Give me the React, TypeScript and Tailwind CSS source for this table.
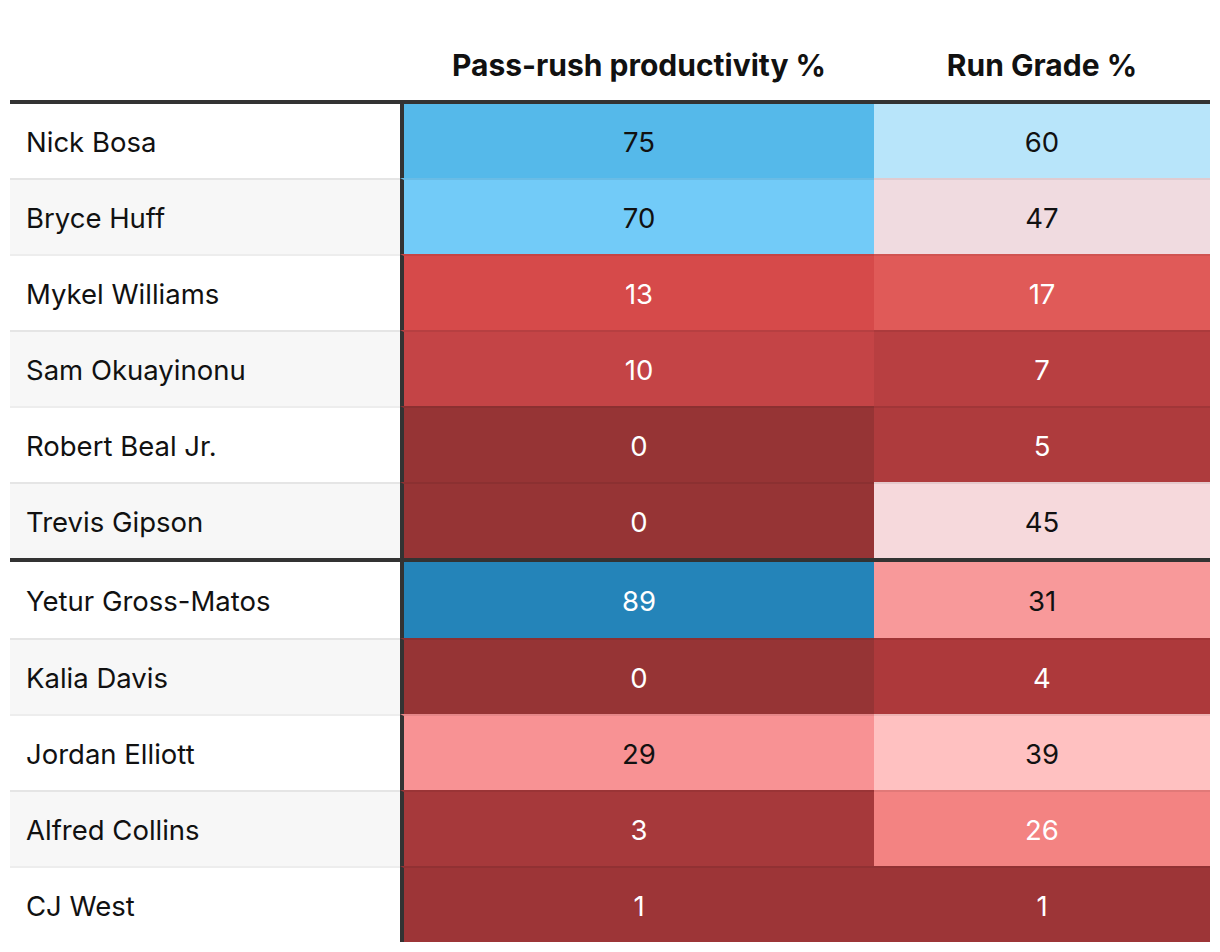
type Row = {
  name: string
  prp: number
  prpBg: string
  prpLight: boolean
  run: number
  runBg: string
  runLight: boolean
}

const groups: Row[][] = [
  [
    { name: "Nick Bosa", prp: 75, prpBg: "bg-[#55b9ea]", prpLight: false, run: 60, runBg: "bg-[#b8e5fa]", runLight: false },
    { name: "Bryce Huff", prp: 70, prpBg: "bg-[#72cbf8]", prpLight: false, run: 47, runBg: "bg-[#f0dbe0]", runLight: false },
    { name: "Mykel Williams", prp: 13, prpBg: "bg-[#d64a4a]", prpLight: true, run: 17, runBg: "bg-[#e05a58]", runLight: true },
    { name: "Sam Okuayinonu", prp: 10, prpBg: "bg-[#c44446]", prpLight: true, run: 7, runBg: "bg-[#b83f41]", runLight: true },
    { name: "Robert Beal Jr.", prp: 0, prpBg: "bg-[#963435]", prpLight: true, run: 5, runBg: "bg-[#ae3b3d]", runLight: true },
    { name: "Trevis Gipson", prp: 0, prpBg: "bg-[#963435]", prpLight: true, run: 45, runBg: "bg-[#f6d9dc]", runLight: false },
  ],
  [
    { name: "Yetur Gross-Matos", prp: 89, prpBg: "bg-[#2484b9]", prpLight: true, run: 31, runBg: "bg-[#f8999a]", runLight: false },
    { name: "Kalia Davis", prp: 0, prpBg: "bg-[#963435]", prpLight: true, run: 4, runBg: "bg-[#ad393b]", runLight: true },
    { name: "Jordan Elliott", prp: 29, prpBg: "bg-[#f89294]", prpLight: false, run: 39, runBg: "bg-[#ffc1c1]", runLight: false },
    { name: "Alfred Collins", prp: 3, prpBg: "bg-[#a6393b]", prpLight: true, run: 26, runBg: "bg-[#f38382]", runLight: true },
    { name: "CJ West", prp: 1, prpBg: "bg-[#9d3537]", prpLight: true, run: 1, runBg: "bg-[#9d3537]", runLight: true },
  ],
]

function TableRow({ row, index, groupStart, first }: { row: Row; index: number; groupStart: boolean; first: boolean }) {
  const zebra = index % 2 === 1 ? "bg-[#f7f7f7]" : "bg-white"
  const edge = first
    ? ""
    : groupStart
      ? "border-t-4 border-t-[#333333]"
      : "border-t-2 border-t-black/[0.07]"
  const height = groupStart && !first ? "h-[80px]" : first ? "h-[74px]" : "h-[76px]"

  return (
    <div className={`flex ${height}`}>
      <div className={`w-[390px] flex items-center pl-[16px] pt-[3px] text-[#111111] ${zebra} ${edge}`}>
        {row.name}
      </div>
      <div
        className={`w-[474px] flex items-center justify-center pt-[3px] border-l-4 border-l-[#333333] ${row.prpBg} ${edge} ${
          row.prpLight ? "text-white" : "text-[#111111]"
        }`}
      >
        {row.prp}
      </div>
      <div
        className={`w-[336px] flex items-center justify-center pt-[3px] ${row.runBg} ${edge} ${
          row.runLight ? "text-white" : "text-[#111111]"
        }`}
      >
        {row.run}
      </div>
    </div>
  )
}

export default function App() {
  let count = 0
  return (
    <div className="min-h-screen bg-white" style={{ fontFamily: "Inter, 'Noto Sans', sans-serif" }}>
      <div className="ml-[10px] w-[1200px] text-[27.5px]">
        <div className="flex h-[104px] items-end border-b-4 border-[#333333] pb-[12px] text-[30px] font-bold text-[#111111]">
          <div className="w-[390px]" />
          <div className="w-[474px] pl-[4px] text-center">Pass-rush productivity %</div>
          <div className="w-[336px] text-center">Run Grade %</div>
        </div>
        {groups.map((group, g) =>
          group.map((row, i) => {
            const index = count++
            return (
              <TableRow
                key={row.name}
                row={row}
                index={index}
                groupStart={i === 0}
                first={g === 0 && i === 0}
              />
            )
          })
        )}
      </div>
    </div>
  )
}
